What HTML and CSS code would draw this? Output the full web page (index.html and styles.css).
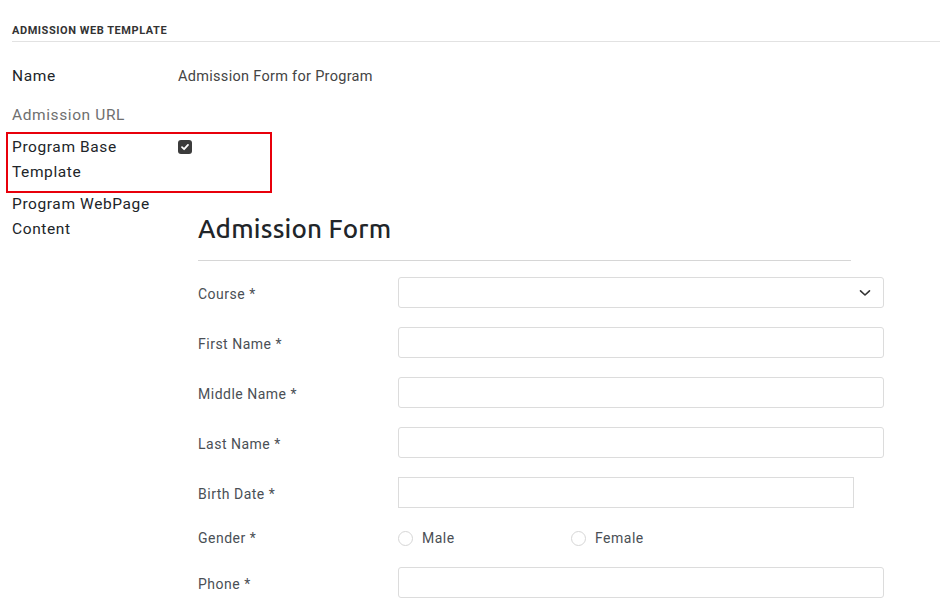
FILE: index.html
```html
<!DOCTYPE html>
<html>
<head>
<meta charset="utf-8">
<link rel="stylesheet" href="styles.css">
</head>
<body>
<div class="sheet">
  <div class="group-title">ADMISSION WEB TEMPLATE</div>
  <div class="field f-name">
    <div class="label">Name</div>
    <div class="value">Admission Form for Program</div>
  </div>
  <div class="field f-url">
    <div class="label muted">Admission URL</div>
    <div class="value"></div>
  </div>
  <div class="field f-base">
    <div class="label">Program Base<br>Template</div>
    <div class="value"><span class="checkbox"><svg width="10" height="10" viewBox="0 0 10 10"><path d="M2 5.2 L4.1 7.2 L8 2.9" fill="none" stroke="#fff" stroke-width="1.8" stroke-linecap="round" stroke-linejoin="round"/></svg></span></div>
    <div class="highlight"></div>
  </div>
  <div class="field f-content">
    <div class="label">Program WebPage<br>Content</div>
    <div class="html-content">
      <h1 class="form-title">Admission Form</h1>
      <hr class="form-sep">
      <div class="frow">
        <label class="flabel">Course *</label>
        <div class="control select"><svg class="chev" width="12" height="8" viewBox="0 0 12 8"><path d="M1.5 1.8 L6 6 L10.5 1.8" fill="none" stroke="#333" stroke-width="1.6" stroke-linecap="round" stroke-linejoin="round"/></svg></div>
      </div>
      <div class="frow">
        <label class="flabel">First Name *</label>
        <div class="control"></div>
      </div>
      <div class="frow">
        <label class="flabel">Middle Name *</label>
        <div class="control"></div>
      </div>
      <div class="frow">
        <label class="flabel">Last Name *</label>
        <div class="control"></div>
      </div>
      <div class="frow">
        <label class="flabel">Birth Date *</label>
        <div class="control date"></div>
      </div>
      <div class="frow radio-row">
        <label class="flabel">Gender *</label>
        <div class="radios">
          <span class="radio"><span class="circle"></span>Male</span>
          <span class="radio"><span class="circle"></span>Female</span>
        </div>
      </div>
      <div class="frow">
        <label class="flabel">Phone *</label>
        <div class="control"></div>
      </div>
    </div>
  </div>
</div>
</body>
</html>
```
FILE: styles.css
```css
html, body {
  margin: 0;
  padding: 0;
  background: #fff;
}
body {
  font-family: Roboto, "Noto Sans", sans-serif;
  color: #212529;
  overflow: hidden;
}
.sheet {
  padding: 22px 7px 0 12px;
}
.group-title {
  font-size: 11px;
  font-weight: 700;
  line-height: 18px;
  color: #333;
  padding-bottom: 1px;
  border-bottom: 1px solid #e2e2e2;
  letter-spacing: 0.55px;
}
.field {
  display: flex;
  font-size: 15.5px;
  line-height: 25px;
  position: relative;
  letter-spacing: 0.6px;
}
.label {
  width: 166px;
  flex: none;
  color: #212529;
}
.label.muted {
  color: #6f6f6f;
}
.value {
  font-size: 14.5px;
  color: #444;
  letter-spacing: 0.3px;
}
.f-name {
  margin-top: 22px;
  margin-bottom: 14px;
}
.f-url {
  margin-bottom: 7px;
}
.f-base {
  margin-bottom: 7px;
}
.f-base .value {
  padding-top: 5px;
}
.checkbox {
  display: flex;
  align-items: center;
  justify-content: center;
  width: 14px;
  height: 14px;
  border-radius: 3px;
  background: #3c3c3c;
}
.highlight {
  position: absolute;
  left: -6px;
  top: -3px;
  width: 262px;
  height: 57px;
  border: 2px solid #e8000b;
}
.html-content {
  padding-left: 20px;
  flex: none;
  width: 686px;
  letter-spacing: 0;
}
.form-title {
  margin: 21px 0 0 0;
  font-family: "Ubuntu", "Noto Sans", "Open Sans", sans-serif;
  font-weight: 500;
  font-size: 26px;
  line-height: 31px;
  color: #212529;
  letter-spacing: 0.2px;
}
.form-sep {
  margin: 16px 0 16px 0;
  width: 653px;
  border: 0;
  border-top: 1px solid #d6d6d6;
  height: 0;
}
.frow {
  display: flex;
  align-items: center;
  margin-bottom: 19px;
}
.flabel {
  width: 200px;
  flex: none;
  font-size: 14px;
  color: #4a4f55;
  letter-spacing: 0.5px;
  padding-top: 3px;
}
.control {
  width: 484px;
  height: 29px;
  border: 1px solid #dcdcdc;
  border-radius: 3px;
  position: relative;
  display: flex;
  align-items: center;
  justify-content: flex-end;
}
.control.date {
  width: 454px;
  border-radius: 0;
}
.chev {
  margin-right: 12px;
}
.radio-row {
  height: 21px;
}
.radio-row .flabel {
  padding-top: 1px;
}
.radios {
  display: flex;
  font-size: 14px;
  color: #4a4f55;
  letter-spacing: 0.5px;
  padding-top: 1px;
}
.radio {
  display: flex;
  align-items: center;
  width: 173px;
}
.circle {
  width: 13px;
  height: 13px;
  border: 1px solid #d6d6d6;
  border-radius: 50%;
  margin-right: 9px;
  box-sizing: content-box;
}
```
